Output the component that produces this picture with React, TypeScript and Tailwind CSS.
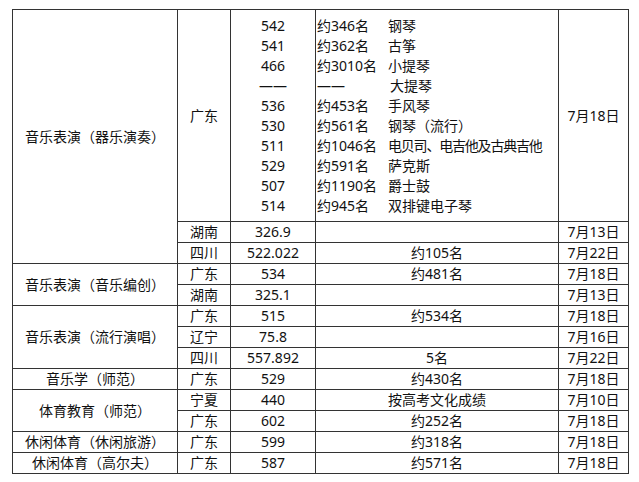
import React from "react";

const cell = "border border-[#333] p-0 text-center align-middle leading-[20px] whitespace-nowrap";

type Row = {
  major?: { text: string; span: number };
  prov: string;
  score: string;
  note: string;
  date: string;
};

const rows: Row[] = [
  { prov: "湖南", score: "326.9", note: "", date: "7月13日" },
  { prov: "四川", score: "522.022", note: "约105名", date: "7月22日" },
  { major: { text: "音乐表演（音乐编创）", span: 2 }, prov: "广东", score: "534", note: "约481名", date: "7月18日" },
  { prov: "湖南", score: "325.1", note: "", date: "7月13日" },
  { major: { text: "音乐表演（流行演唱）", span: 3 }, prov: "广东", score: "515", note: "约534名", date: "7月18日" },
  { prov: "辽宁", score: "75.8", note: "", date: "7月16日" },
  { prov: "四川", score: "557.892", note: "5名", date: "7月22日" },
  { major: { text: "音乐学（师范）", span: 1 }, prov: "广东", score: "529", note: "约430名", date: "7月18日" },
  { major: { text: "体育教育（师范）", span: 2 }, prov: "宁夏", score: "440", note: "按高考文化成绩", date: "7月10日" },
  { prov: "广东", score: "602", note: "约252名", date: "7月18日" },
  { major: { text: "休闲体育（休闲旅游）", span: 1 }, prov: "广东", score: "599", note: "约318名", date: "7月18日" },
  { major: { text: "休闲体育（高尔夫）", span: 1 }, prov: "广东", score: "587", note: "约571名", date: "7月18日" },
];

const instruments: [string, string, string][] = [
  ["542", "约346名", "钢琴"],
  ["541", "约362名", "古筝"],
  ["466", "约3010名", "小提琴"],
  ["——", "——", "大提琴"],
  ["536", "约453名", "手风琴"],
  ["530", "约561名", "钢琴（流行）"],
  ["511", "约1046名", "电贝司、电吉他及古典吉他"],
  ["529", "约591名", "萨克斯"],
  ["507", "约1190名", "爵士鼓"],
  ["514", "约945名", "双排键电子琴"],
];

export default function App() {
  return (
    <div className="w-[639px] h-[482px] bg-white pt-[9px] pl-[12px] font-['Noto_Sans','Noto_Sans_CJK_SC',sans-serif] text-[14px] text-[#111]">
      <table className="border-collapse table-fixed w-[616px]">
        <colgroup>
          <col className="w-[165px]" />
          <col className="w-[53px]" />
          <col className="w-[85px]" />
          <col className="w-[243px]" />
          <col className="w-[70px]" />
        </colgroup>
        <tbody>
          <tr className="h-[212px]">
            <td className={cell} rowSpan={3}>音乐表演（器乐演奏）</td>
            <td className={cell}>广东</td>
            <td className={cell}>
              <div className="flex flex-col items-center">
                {instruments.map((r, i) => (
                  <div key={i} className="h-[20px]">{r[0]}</div>
                ))}
              </div>
            </td>
            <td className={cell + " text-left"}>
              <div className="flex flex-col pl-[1px]">
                {instruments.map((r, i) => (
                  <div key={i} className="h-[20px] flex">
                    <span className="w-[71px] shrink-0">{r[1]}</span>
                    <span
                      className={
                        r[1] === "——"
                          ? "ml-[2px]"
                          : r[2].length > 10
                          ? "tracking-[-1.2px]"
                          : ""
                      }
                    >
                      {r[2]}
                    </span>
                  </div>
                ))}
              </div>
            </td>
            <td className={cell}>7月18日</td>
          </tr>
          {rows.map((r, i) => (
            <tr key={i} className="h-[21px]">
              {r.major && (
                <td className={cell} rowSpan={r.major.span}>{r.major.text}</td>
              )}
              <td className={cell}>{r.prov}</td>
              <td className={cell}>{r.score}</td>
              <td className={cell}>{r.note}</td>
              <td className={cell}>{r.date}</td>
            </tr>
          ))}
        </tbody>
      </table>
    </div>
  );
}
